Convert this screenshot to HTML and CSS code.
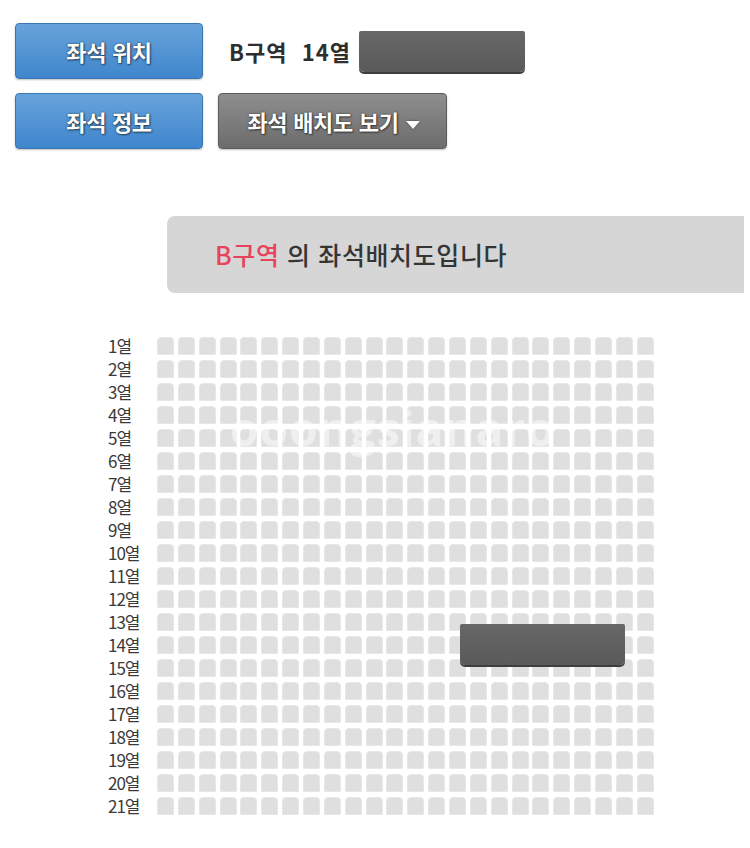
FILE: index.html
```html
<!DOCTYPE html>
<html lang="ko">
<head>
  <meta charset="UTF-8">
  <title>좌석 배치도</title>
  <meta name="viewport" content="width=device-width, initial-scale=1.0">
  <link rel="stylesheet" href="styles.css">
</head>
<body>
  <div class="seat-info">
    <div class="info-row">
      <button class="btn-blue">좌석 위치</button>
      <span class="seat-pos">B구역&nbsp; 14열</span>
      <span class="mask mask-top"></span>
    </div>
    <div class="info-row">
      <button class="btn-blue">좌석 정보</button>
      <button class="btn-gray">좌석 배치도 보기 <span class="caret"></span></button>
    </div>
  </div>

  <div class="zone-title"><em>B구역</em> 의 좌석배치도입니다</div>

  <div class="seat-map" id="seatMap">
    <div class="watermark">ooongsianaro</div>
    <span class="mask mask-seat"></span>
  </div>

  <script>
    (function(){
      const map = document.getElementById('seatMap');
      const ROWS = 21, COLS = 24;

      for (let r = 1; r <= ROWS; r++) {
        const row = document.createElement('div');
        row.className = 'seat-row';

        const label = document.createElement('span');
        label.className = 'row-label';
        label.textContent = r + '열';
        row.appendChild(label);

        const seats = document.createElement('div');
        seats.className = 'seats';
        for (let c = 0; c < COLS; c++) {
          const s = document.createElement('span');
          s.className = 'seat';
          seats.appendChild(s);
        }
        row.appendChild(seats);
        map.appendChild(row);
      }
    })();
  </script>
</body>
</html>
```

FILE: styles.css
```css
body {
  margin: 0;
  background: #fff;
  color: #333;
  font-family: "Noto Sans CJK KR", "Noto Sans", sans-serif;
}

/* Top info buttons */
.seat-info {
  padding: 23px 0 0 15px;
}
.info-row {
  display: flex;
  align-items: center;
  margin-bottom: 14px;
}
.info-row:last-child { margin-bottom: 0; }
.btn-blue,
.btn-gray {
  height: 56px;
  border-radius: 4px;
  color: #fff;
  font-family: inherit;
  font-size: 22px;
  font-weight: 700;
  letter-spacing: -0.3px;
  cursor: pointer;
  text-shadow: 0 0 2px rgba(0,0,0,.6), 1px 1px 2px rgba(0,0,0,.5);
  box-shadow: 0 1px 2px rgba(0,0,0,.25);
}
.btn-blue {
  width: 188px;
  background: linear-gradient(#68a3da, #3f86cd);
  border: 1px solid #3a76b4;
}
.btn-gray {
  width: 229px;
  margin-left: 15px;
  padding: 0 0 0 2px;
  background: linear-gradient(#8e8e8e, #6c6c6c);
  border: 1px solid #5c5c5c;
}
.caret {
  display: inline-block;
  width: 0;
  height: 0;
  margin-left: 1px;
  vertical-align: middle;
  border-left: 7px solid transparent;
  border-right: 7px solid transparent;
  border-top: 8px solid #fff;
  filter: drop-shadow(0 0 1px rgba(0,0,0,.5));
}
.seat-pos {
  margin-left: 26px;
  font-size: 22px;
  font-weight: 700;
  color: #2e2e2e;
  letter-spacing: 1px;
}

/* Hidden-value blocks */
.mask {
  display: block;
  background: linear-gradient(#676767, #5a5a5a);
  border-radius: 2px 2px 5px 5px;
  box-shadow: 0 2px 0 #3e3e3e;
}
.mask-top {
  width: 166px;
  height: 41px;
  margin-left: 8px;
  margin-top: 1px;
}

/* Zone heading */
.zone-title {
  margin: 67px 0 0 167px;
  width: 577px;
  height: 77px;
  line-height: 77px;
  padding-left: 48px;
  box-sizing: border-box;
  background: #d6d6d6;
  border-radius: 8px 0 0 8px;
  font-size: 25px;
  font-weight: 500;
  color: #353535;
  letter-spacing: 0.6px;
}
.zone-title em {
  font-style: normal;
  color: #e8435a;
}

/* Seat map */
.seat-map {
  position: relative;
  margin: 44px 0 0 108px;
}
.seat-row {
  display: flex;
  align-items: center;
  height: 18px;
  margin-bottom: 5px;
}
.row-label {
  width: 49px;
  font-size: 17px;
  line-height: 18px;
  color: #3a3a3a;
  letter-spacing: -1px;
}
.seats {
  display: flex;
  gap: 3.87px;
}
.seat {
  width: 17px;
  height: 18px;
  box-sizing: border-box;
  background: #dfdfdf;
  border: 1px solid #e7e7e7;
  border-radius: 4px 4px 1px 1px;
}
.mask-seat {
  position: absolute;
  left: 352px;
  top: 287px;
  width: 165px;
  height: 41px;
  z-index: 2;
}
.watermark {
  position: absolute;
  left: 122px;
  top: 60px;
  z-index: 1;
  font-family: "Open Sans", sans-serif;
  font-size: 46px;
  font-weight: 700;
  letter-spacing: 1px;
  color: rgba(255,255,255,.5);
  pointer-events: none;
}
```
